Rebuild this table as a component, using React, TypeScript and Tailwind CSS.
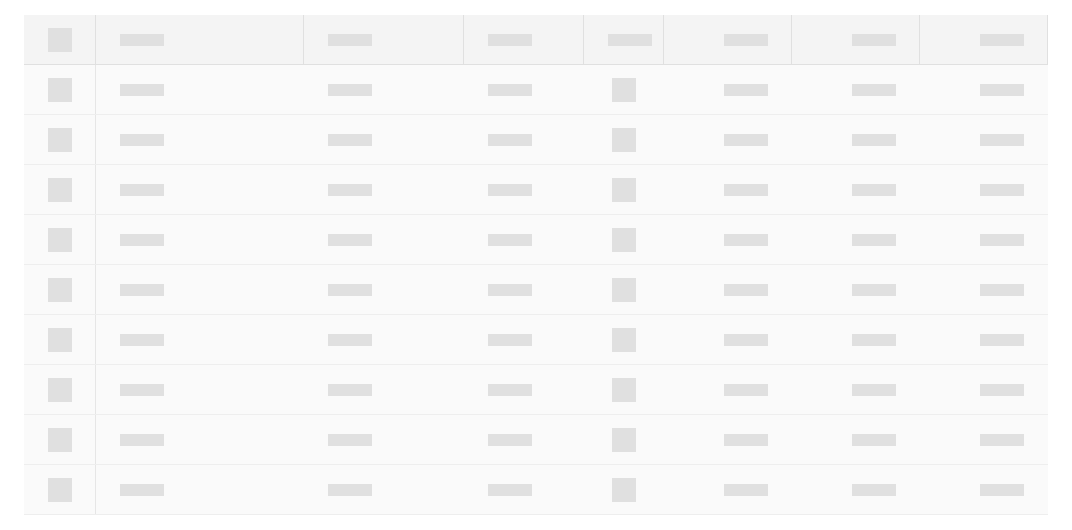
const cols = [
  { w: 'w-[72px]', kind: 'box' },
  { w: 'w-[208px]', kind: 'left' },
  { w: 'w-[160px]', kind: 'left' },
  { w: 'w-[120px]', kind: 'left' },
  { w: 'w-[80px]', kind: 'center' },
  { w: 'w-[128px]', kind: 'right' },
  { w: 'w-[128px]', kind: 'right' },
  { w: 'w-[128px]', kind: 'right' },
];

const rows = Array.from({ length: 9 }, (_, i) => i);

function Bar() {
  return <div className="h-3 w-11 bg-[#e0e0e0]" />;
}

function Box() {
  return <div className="h-6 w-6 bg-[#e0e0e0]" />;
}

function HeaderRow() {
  return (
    <div className="flex border-b border-[#e0e0e0] bg-[#f4f4f4]">
      {cols.map((c, i) => (
        <div
          key={i}
          className={`${c.w} flex h-[49px] items-center border-r border-[#e0e0e0] ${
            c.kind === 'box' ? 'justify-center' : c.kind === 'right' ? 'justify-end pr-[23px]' : 'justify-start pl-6'
          }`}
        >
          {c.kind === 'box' ? <Box /> : <Bar />}
        </div>
      ))}
    </div>
  );
}

function BodyRow() {
  return (
    <div className="flex border-b border-[#eeeeee] bg-[#fafafa]">
      {cols.map((c, i) => (
        <div
          key={i}
          className={`${c.w} flex h-[49px] items-center ${i === 0 ? 'border-r border-[#e6e6e6]' : ''} ${
            c.kind === 'box' || c.kind === 'center'
              ? 'justify-center'
              : c.kind === 'right'
              ? 'justify-end pr-6'
              : 'justify-start pl-6'
          }`}
        >
          {c.kind === 'box' || c.kind === 'center' ? <Box /> : <Bar />}
        </div>
      ))}
    </div>
  );
}

export default function App() {
  return (
    <div className="min-h-[530px] bg-white px-6 pt-[15px]">
      <div className="w-[1024px]">
        <HeaderRow />
        {rows.map((r) => (
          <BodyRow key={r} />
        ))}
      </div>
    </div>
  );
}
